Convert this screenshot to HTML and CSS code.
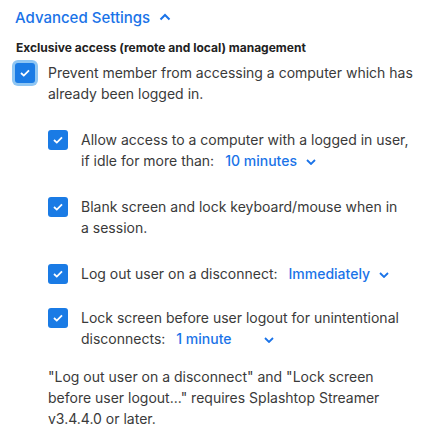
FILE: index.html
```html
<!DOCTYPE html>
<html lang="en">
<head>
    <meta charset="UTF-8">
    <meta name="viewport" content="width=device-width, initial-scale=1.0">
    <title>Advanced Settings</title>
    <link rel="stylesheet" href="styles.css">
</head>
<body>
    <div class="panel">
        <div class="toggle">
            Advanced Settings
            <svg class="chev" width="12" height="8" viewBox="0 0 12 8"><path d="M1.5 6.5 6 2l4.5 4.5" fill="none" stroke="currentColor" stroke-width="2"/></svg>
        </div>

        <h4>Exclusive access (remote and local) management</h4>

        <div class="row main">
            <span class="box focus"><svg width="12" height="10" viewBox="0 0 12 10"><path d="M2 5l2.8 2.6L10 2.4" fill="none" stroke="#fff" stroke-width="1.8"/></svg></span>
            <div class="label">Prevent member from accessing a computer which has already been logged in.</div>
        </div>

        <div class="sub">
            <div class="row">
                <span class="box"><svg width="12" height="10" viewBox="0 0 12 10"><path d="M2 5l2.8 2.6L10 2.4" fill="none" stroke="#fff" stroke-width="1.8"/></svg></span>
                <div class="label">Allow access to a computer with a logged in user, if idle for more than:<span class="select">10 minutes</span><svg class="caret" width="10" height="6" viewBox="0 0 10 6"><path d="M1 1l4 4 4-4" fill="none" stroke="#1a73e8" stroke-width="1.8"/></svg></div>
            </div>
            <div class="row">
                <span class="box"><svg width="12" height="10" viewBox="0 0 12 10"><path d="M2 5l2.8 2.6L10 2.4" fill="none" stroke="#fff" stroke-width="1.8"/></svg></span>
                <div class="label">Blank screen and lock keyboard/mouse when in<br>a session.</div>
            </div>
            <div class="row">
                <span class="box"><svg width="12" height="10" viewBox="0 0 12 10"><path d="M2 5l2.8 2.6L10 2.4" fill="none" stroke="#fff" stroke-width="1.8"/></svg></span>
                <div class="label">Log out user on a disconnect:<span class="select">Immediately</span><svg class="caret" width="10" height="6" viewBox="0 0 10 6"><path d="M1 1l4 4 4-4" fill="none" stroke="#1a73e8" stroke-width="1.8"/></svg></div>
            </div>
            <div class="row">
                <span class="box"><svg width="12" height="10" viewBox="0 0 12 10"><path d="M2 5l2.8 2.6L10 2.4" fill="none" stroke="#fff" stroke-width="1.8"/></svg></span>
                <div class="label">Lock screen before user logout for unintentional disconnects:<span class="select wide">1 minute</span><svg class="caret" width="10" height="6" viewBox="0 0 10 6"><path d="M1 1l4 4 4-4" fill="none" stroke="#1a73e8" stroke-width="1.8"/></svg></div>
            </div>
        </div>

        <p class="note">"Log out user on a disconnect" and "Lock screen before user logout..." requires Splashtop Streamer v3.4.4.0 or later.</p>
    </div>
</body>
</html>
```

FILE: styles.css
```css
body {
    margin: 0;
    font-family: Inter, "Noto Sans", sans-serif;
    background: #fff;
    color: #3a3a3a;
}
.panel {
    padding: 7px 16px 0 15px;
}
.toggle {
    display: flex;
    align-items: center;
    gap: 9px;
    color: #1a73e8;
    font-size: 15px;
    font-weight: 500;
    height: 20px;
}
.chev { margin-top: -1px; }
h4 {
    margin: 13px 0 6px 1px;
    font-size: 12px;
    font-weight: 700;
    color: #222;
    line-height: 16px;
}
.row {
    display: flex;
    gap: 13px;
    font-size: 14px;
    line-height: 21px;
}
.box {
    flex: none;
    width: 20px;
    height: 20px;
    margin-top: 1px;
    border-radius: 3px;
    background: #1a7be5;
    display: flex;
    align-items: center;
    justify-content: center;
}
.box.focus { box-shadow: 0 0 0 3px #8fc6f3; }
.sub {
    padding-left: 33px;
}
.sub .row { margin-top: 25px; }
.sub .row:nth-child(4) { margin-top: 23px; }
.select {
    color: #1a73e8;
    font-weight: 500;
    margin-left: 11px;
}
.select.wide {
    display: inline-block;
    width: 79px;
}
.caret {
    margin-left: 9px;
    vertical-align: middle;
}
.note {
    margin: 17px 0 0 33px;
    font-size: 14px;
    line-height: 21px;
}
```
